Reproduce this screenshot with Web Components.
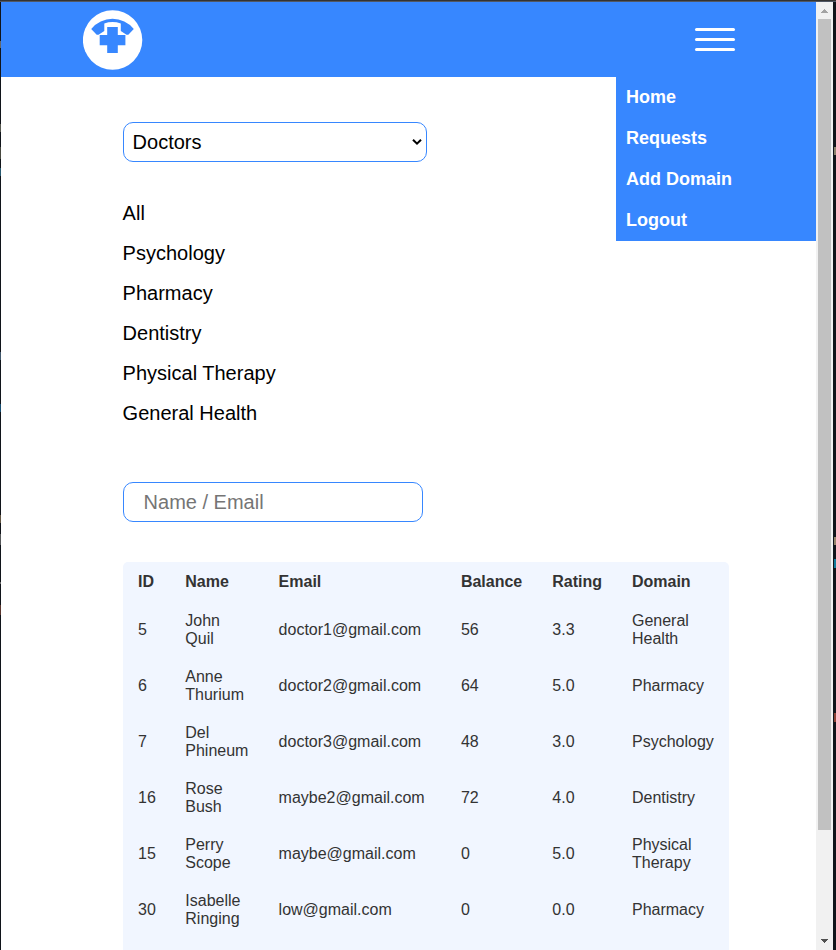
<!DOCTYPE html>
<html lang="en">
<head>
<meta charset="utf-8">
<title>Doctors</title>
<style>
html,body{margin:0;height:100%;overflow:hidden;background:#101419;font-family:"Liberation Sans",Arial,sans-serif}
</style>
</head>
<body>
<app-window></app-window>
<script>
const define = (name, html, setup) => customElements.define(name, class extends HTMLElement {
  constructor() {
    super();
    this.attachShadow({mode: 'open'}).innerHTML = html;
  }
  connectedCallback() { if (setup) setup(this, this.shadowRoot); }
});

define('brand-logo', `<style>:host{display:block;width:60px;height:60px}svg{display:block}</style>
<svg width="60" height="60" viewBox="0 0 60 60">
<circle cx="29.6" cy="30" r="29.7" fill="#fff"/>
<path d="M8.2 18.9A27.6 27.6 0 0 1 50.8 18.9L45.3 24.8H43.5L37.8 21V13.4Q29.5 10.6 21.3 13.4V21L15.5 24.8H13.7Z" fill="#3787ff"/>
<path d="M24.2 17H34.8V25H42.4V35.2H34.8V43H24.2V35.2H16.7V25H24.2Z" fill="#3787ff"/>
</svg>`);

define('menu-toggle', `<style>:host{display:flex;flex-direction:column;gap:7px;width:40px}
i{height:3px;border-radius:2px;background:#fff}</style><i></i><i></i><i></i>`);

define('nav-link', `<style>:host{display:block;height:41px;box-sizing:border-box;padding:10px 10px;font:bold 18px/21px "Liberation Sans",Arial,sans-serif;color:#fff}</style><slot></slot>`);

define('nav-menu', `<style>:host{display:block;position:absolute;top:100%;right:0;width:200px;background:#3787ff}</style><slot></slot>`);

define('nav-bar', `<style>:host{display:flex;position:relative;height:75px;box-sizing:border-box;padding:0 81px 0 82px;align-items:center;justify-content:space-between;background:#3787ff}
brand-logo{margin-top:1px}menu-toggle{margin-top:-1px}</style>
<brand-logo></brand-logo><menu-toggle></menu-toggle>
<nav-menu><nav-link>Home</nav-link><nav-link>Requests</nav-link><nav-link>Add Domain</nav-link><nav-link>Logout</nav-link></nav-menu>`);

define('role-select', `<style>:host{display:flex;align-items:center;justify-content:space-between;width:304px;height:40px;box-sizing:border-box;border:1px solid #3787ff;border-radius:10px;padding:0 4px 0 8.6px;background:#fff;font-size:20px;line-height:23px;color:#000}
svg{display:block}</style><slot></slot>
<svg width="10" height="8" viewBox="0 0 10 8"><path d="M1 1.7L5 5.7L9 1.7" fill="none" stroke="#000" stroke-width="2"/></svg>`);

define('domain-option', `<style>:host{display:block;height:40px;font-size:20px;line-height:41px;color:#000}</style><slot></slot>`);

define('domain-list', `<style>:host{display:block;margin:31px 0 0 -.4px}</style><slot></slot>`);

define('search-field', `<style>:host{display:block;margin-top:49px;width:300px;height:40px;box-sizing:border-box;border:1px solid #3787ff;border-radius:10px;padding:0 19.6px;background:#fff;font-size:20px;line-height:38px;color:#757575}</style><slot></slot>`);

define('doctor-table', `<style>:host{display:block;margin-top:40px;width:606px;border-radius:5px 5px 0 0;overflow:hidden;background:#f1f6ff;color:#333;font-size:16px;line-height:18px}
.row{display:grid;grid-template-columns:47.3px 93.3px 182.3px 91.4px 79.7px 112px;align-items:center;height:56px}
.head{height:39px;padding-bottom:1px;font-weight:bold}
.row>div{padding:0 14px 0 15px}</style><div class="row head"></div>`, (host, root) => {
  const head = root.querySelector('.head');
  const fill = (row, cells) => cells.forEach(text => {
    const cell = document.createElement('div');
    cell.textContent = text;
    row.append(cell);
  });
  fill(head, ['ID', 'Name', 'Email', 'Balance', 'Rating', 'Domain']);
  [['5', 'John Quil', 'doctor1@gmail.com', '56', '3.3', 'General Health'],
   ['6', 'Anne Thurium', 'doctor2@gmail.com', '64', '5.0', 'Pharmacy'],
   ['7', 'Del Phineum', 'doctor3@gmail.com', '48', '3.0', 'Psychology'],
   ['16', 'Rose Bush', 'maybe2@gmail.com', '72', '4.0', 'Dentistry'],
   ['15', 'Perry Scope', 'maybe@gmail.com', '0', '5.0', 'Physical Therapy'],
   ['30', 'Isabelle Ringing', 'low@gmail.com', '0', '0.0', 'Pharmacy']].forEach(cells => {
    const row = document.createElement('div');
    row.className = 'row';
    fill(row, cells);
    root.append(row);
  });
  const rest = document.createElement('div');
  rest.style.height = '20px';
  root.append(rest);
});

define('scroll-rail', `<style>:host{display:flex;flex-direction:column;justify-content:space-between;width:17px;box-sizing:border-box;background:#f1f1f1}
svg{display:block}.thumb{width:13px;height:811px;margin:0 2px;background:#c1c1c1}.fill{flex:1}</style>
<svg width="17" height="17"><path d="M5 11V10H6V9H7V8H8V7H9V8H10V9H11V10H12V11Z" fill="#a3a3a3" shape-rendering="crispEdges"/></svg>
<div class="thumb"></div><div class="fill"></div>
<svg width="17" height="17"><path d="M5 6H12V7H11V8H10V9H9V10H8V9H7V8H6V7H5Z" fill="#505050" shape-rendering="crispEdges"/></svg>`);

define('desk-edge', `<style>:host{display:block;overflow:hidden;background:#10141a}svg{display:block}</style><svg width="3" height="948" shape-rendering="crispEdges"></svg>`, (host, root) => {
  const left = host.getAttribute('side') === 'left';
  const marks = left
    ? [[39, 7, '#64686a'], [122, 8, '#57584f'], [145, 12, '#47483f'], [166, 8, '#285a70'], [350, 8, '#40576b'], [402, 8, '#174d70'], [513, 8, '#625542'], [532, 11, '#555759'], [580, 2, '#686868'], [603, 10, '#5a352d']]
    : [[145, 8, '#8a806b'], [535, 8, '#94836a'], [557, 9, '#137b9a'], [711, 9, '#8a4035']];
  root.querySelector('svg').innerHTML = marks.map(([y, h, c]) =>
    `<rect x="${left ? 0 : 1}" y="${y}" width="${left ? 1 : 2}" height="${h}" fill="${c}"/>`).join('');
});

define('app-window', `<style>:host{display:grid;grid-template-columns:1px 815px 17px 3px;height:950px;box-sizing:border-box;border-top:1px solid #333;overflow:hidden;background:#fff}
main{overflow:hidden;height:949px}.page{padding:45px 0 0 122px}
main,scroll-rail,desk-edge{border-top:1px solid #505764;box-sizing:border-box;height:949px}</style>
<desk-edge side="left"></desk-edge>
<main><nav-bar></nav-bar><div class="page">
<role-select>Doctors</role-select>
<domain-list><domain-option>All</domain-option><domain-option>Psychology</domain-option><domain-option>Pharmacy</domain-option><domain-option>Dentistry</domain-option><domain-option>Physical Therapy</domain-option><domain-option>General Health</domain-option></domain-list>
<search-field>Name / Email</search-field>
<doctor-table></doctor-table></div></main>
<scroll-rail></scroll-rail><desk-edge side="right"></desk-edge>`);
</script>
</body>
</html>
